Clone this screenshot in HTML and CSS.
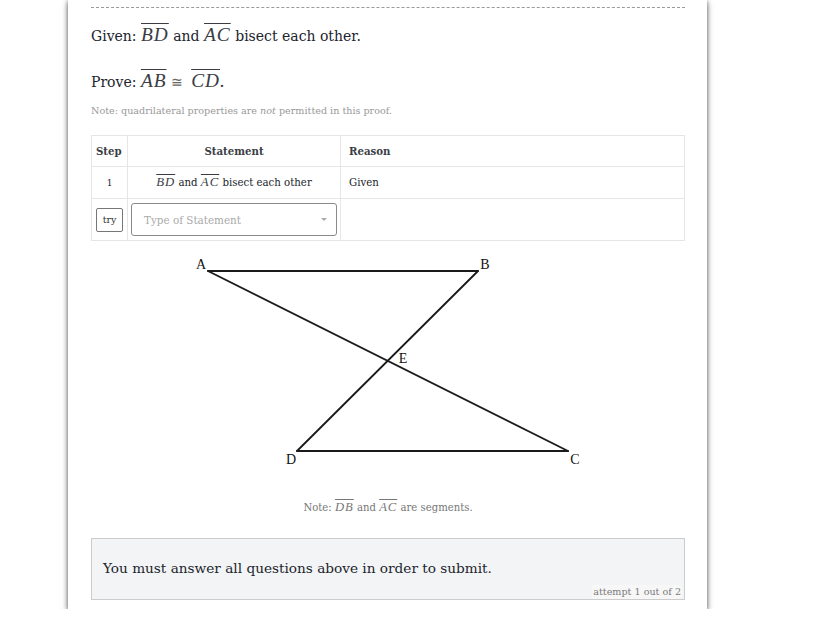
FILE: index.html
```html
<!DOCTYPE html>
<html>
<head>
<meta charset="utf-8">
<link rel="stylesheet" href="styles.css">
</head>
<body>
<div class="card">
  <div class="dash"></div>
  <p class="given">Given: <span class="m"><span class="ov">BD</span></span> and <span class="m"><span class="ov">AC</span></span> bisect each other.</p>
  <p class="prove">Prove: <span class="m"><span class="ov">AB</span> <span class="rel">≅</span> <span class="ov">CD</span>.</span></p>
  <p class="note">Note: quadrilateral properties are <i>not</i> permitted in this proof.</p>
  <table class="proof">
    <thead>
      <tr><th class="c-step">Step</th><th class="c-stmt">Statement</th><th class="c-reason">Reason</th></tr>
    </thead>
    <tbody>
      <tr class="r1"><td class="c-step num">1</td><td class="c-stmt center"><span class="m"><span class="ov">BD</span></span> and <span class="m"><span class="ov">AC</span></span> bisect each other</td><td class="c-reason">Given</td></tr>
      <tr class="r2"><td class="c-step"><button class="try">try</button></td><td class="c-stmt sel-cell"><div class="select"><span>Type of Statement</span><span class="caret"></span></div></td><td class="c-reason"></td></tr>
    </tbody>
  </table>
  <svg class="diagram" width="594" height="222" viewBox="0 0 594 222">
    <g stroke="#1a1a1a" stroke-width="1.8" fill="none" stroke-linecap="round">
      <line x1="117" y1="21" x2="387" y2="21"/>
      <line x1="117" y1="21" x2="477" y2="201"/>
      <line x1="387" y1="21" x2="206" y2="201"/>
      <line x1="206" y1="201" x2="477" y2="201"/>
    </g>
    <g class="lbl" font-size="14">
      <text x="110" y="19" text-anchor="middle">A</text>
      <text x="394" y="19" text-anchor="middle">B</text>
      <text x="312" y="113" text-anchor="middle">E</text>
      <text x="200" y="214" text-anchor="middle">D</text>
      <text x="484" y="214" text-anchor="middle">C</text>
    </g>
  </svg>
  <p class="segnote">Note: <span class="m"><span class="ov">DB</span></span> and <span class="m"><span class="ov">AC</span></span> are segments.</p>
  <div class="submit">
    <p>You must answer all questions above in order to submit.</p>
    <span class="attempt">attempt 1 out of 2</span>
  </div>
</div>
</body>
</html>
```
FILE: styles.css
```css
html, body {
  margin: 0;
  padding: 0;
  background: #ffffff;
}
body {
  font-family: "DejaVu Serif", "Liberation Serif", serif;
  color: #21242c;
}
.card {
  margin-left: 68px;
  width: 639px;
  box-sizing: border-box;
  padding: 7px 22px 9px 23px;
  background: #fff;
  box-shadow: 0 3px 6px rgba(0,0,0,0.5), 0 0 4px rgba(0,0,0,0.35);
  height: 609px;
}
.dash {
  border-top: 1px dashed #9a9a9a;
}
p { margin: 0; }
.given {
  font-size: 14px;
  margin-top: 16px;
  line-height: 22px;
}
.prove {
  font-size: 14px;
  margin-top: 22px;
  line-height: 24px;
}
.m {
  font-family: "Liberation Serif", serif;
  font-style: italic;
  font-size: 1.38em;
  color: #3a3d44;
}
.ov {
  text-decoration: overline;
  text-decoration-thickness: 1px;
  letter-spacing: 1px;
}
.rel { font-style: normal; font-family: "DejaVu Serif", serif; font-size: 0.75em; color: #666; margin-right: 3px; }
.note {
  font-size: 9.6px;
  color: #999;
  margin-top: 10px;
  line-height: 14px;
}
.proof {
  margin-top: 17px;
  width: 594px;
  border-collapse: collapse;
  font-size: 10.2px;
}
.proof th, .proof td {
  border: 1px solid #e6e6e6;
  padding: 0 8px;
  text-align: left;
}
.proof th {
  height: 30px;
  font-weight: bold;
  color: #3b3e45;
}
.proof th.c-step { padding: 0 4px; width: 27px; }
.proof th.c-stmt { text-align: center; width: 196px; }
.r1 td { height: 31px; }
.r1 td.num { text-align: center; font-size: 9px; }
.center { text-align: center !important; }
.r1 .m { font-size: 1.25em; }
.r2 td { height: 41px; }
.proof td.c-step { padding: 0 4px; }
.try {
  font-family: "DejaVu Serif", serif;
  font-size: 9.5px;
  background: #fff;
  border: 1px solid #777;
  border-radius: 2px;
  padding: 0;
  width: 27px;
  height: 24px;
  color: #333;
}
.proof td.sel-cell { padding: 0 3px; }
.select {
  height: 33px;
  box-sizing: border-box;
  border: 1px solid #8a8a8a;
  border-radius: 3px;
  display: flex;
  align-items: center;
  justify-content: space-between;
  padding: 0 9px 0 12px;
  color: #aaa;
  font-size: 10.4px;
}
.caret {
  width: 0; height: 0;
  border-left: 3px solid transparent;
  border-right: 3px solid transparent;
  border-top: 3px solid #aaa;
}
.diagram {
  display: block;
  margin-top: 9px;
}
.lbl text {
  font-family: "Liberation Serif", serif;
  fill: #111;
}
.segnote {
  text-align: center;
  font-size: 10.1px;
  color: #777;
  margin-top: 27px;
  line-height: 16px;
}
.segnote .m { color: #777; font-size: 1.25em; }
.submit {
  margin-top: 22px;
  height: 62px;
  box-sizing: border-box;
  border: 1px solid #ccc;
  background: #f3f4f5;
  position: relative;
  padding: 20px 11px 0 11px;
}
.submit p {
  font-size: 13.65px;
  line-height: 19px;
  color: #21242c;
}
.attempt {
  position: absolute;
  right: 2px;
  bottom: 0;
  font-size: 9.6px;
  line-height: 14px;
  color: #7a7a7a;
  background: #f7f7f7;
  padding: 0 1px;
}
```
